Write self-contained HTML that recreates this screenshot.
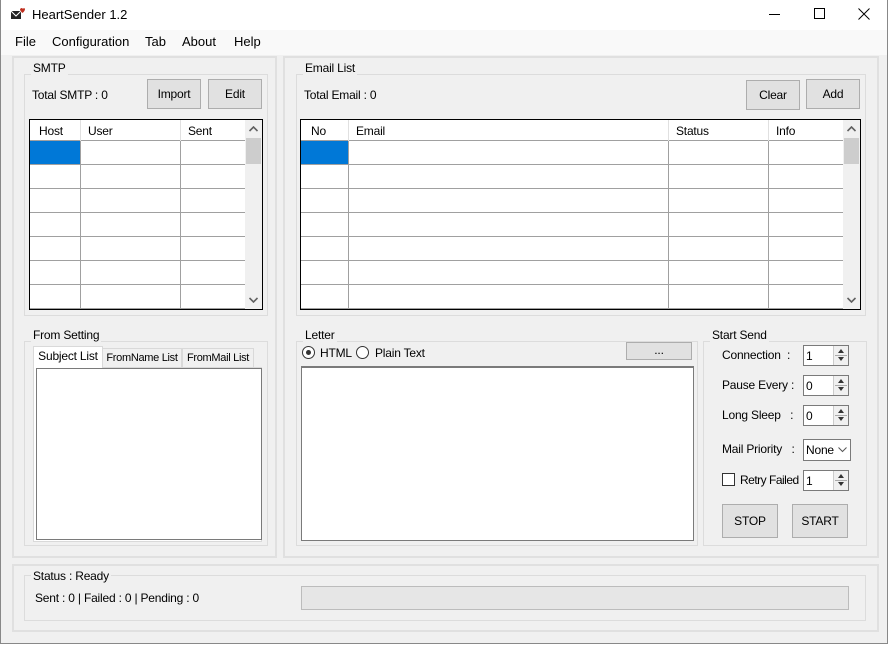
<!DOCTYPE html>
<html><head><meta charset="utf-8"><style>
*{box-sizing:border-box;margin:0;padding:0}
body{width:892px;height:645px;overflow:hidden;background:#fff;font-family:"Liberation Sans",Arial,sans-serif;font-size:12px;letter-spacing:-0.2px;color:#000;position:relative}
.a{position:absolute}
.win{left:0;top:0;width:888px;height:644px;border-left:1px solid #888;border-right:1px solid #888;border-bottom:1px solid #888;background:#f0f0f0}
.title{left:1px;top:0;width:886px;height:30px;background:#fff}
.menu{left:1px;top:30px;width:886px;height:25px;background:#f9f9f9;font-size:13px;letter-spacing:0}
.panel{border:2px solid #e0e0e0;background:#f0f0f0}
.grp{border:1px solid #dcdcdc}
.lbl{background:#f0f0f0;padding:0 2px;white-space:nowrap}
.btn{background:#e1e1e1;border:1px solid #adadad;text-align:center;font-size:12px}
.grid{background:#fff;border:1px solid #000;overflow:hidden}
.spin{background:#fff;border:1px solid #7a7a7a}
.arr{font-size:13px;color:#606060;font-weight:bold}
</style></head><body>
<div class="a win"></div>
<div class="a title"></div>
<svg class="a" style="left:11px;top:8px" width="14" height="12"><rect x="0" y="3" width="10" height="8" fill="#222"/><path d="M0 3 L5 8 L10 3" stroke="#fff" fill="none" stroke-width="1"/><path d="M9 1 q2-2 3 0 q1-2 2 0 q0 2-2.5 4 q-2.5-2-2.5-4z" fill="#c03020"/></svg>
<div class="a" style="left:32px;top:7px;font-size:13px;letter-spacing:0">HeartSender 1.2</div>
<div class="a" style="left:769px;top:14px;width:11px;height:1px;background:#000"></div>
<div class="a" style="left:814px;top:8px;width:11px;height:11px;border:1px solid #000"></div>
<svg class="a" style="left:858px;top:8px" width="12" height="12"><path d="M0.5 0.5L11.5 11.5M11.5 0.5L0.5 11.5" stroke="#000" stroke-width="1"/></svg>
<div class="a menu"><span class="a" style="left:14px;top:4px">File</span><span class="a" style="left:51px;top:4px">Configuration</span><span class="a" style="left:144px;top:4px">Tab</span><span class="a" style="left:181px;top:4px">About</span><span class="a" style="left:233px;top:4px">Help</span></div>

<div class="a panel" style="left:12px;top:56px;width:265px;height:502px"></div>
<div class="a panel" style="left:283px;top:56px;width:596px;height:502px"></div>
<div class="a panel" style="left:12px;top:564px;width:867px;height:68px"></div>

<!-- SMTP -->
<div class="a grp" style="left:24px;top:74px;width:244px;height:242px"></div>
<div class="a lbl" style="left:31px;top:61px">SMTP</div>
<div class="a" style="left:32px;top:88px">Total SMTP : 0</div>
<div class="a btn" style="left:147px;top:79px;width:54px;height:30px;line-height:28px">Import</div>
<div class="a btn" style="left:208px;top:79px;width:54px;height:30px;line-height:28px">Edit</div>
<div class="a grid" style="left:29px;top:119px;width:234px;height:191px">
 <div class="a" style="left:0;top:0;width:215px;height:21px;border-bottom:1px solid #a0a0a0">
  <span class="a" style="left:9px;top:4px">Host</span><span class="a" style="left:58px;top:4px">User</span><span class="a" style="left:158px;top:4px">Sent</span>
  <div class="a" style="left:50px;top:0;width:1px;height:21px;background:#e0e0e0"></div><div class="a" style="left:150px;top:0;width:1px;height:21px;background:#e0e0e0"></div>
 </div>
 <div class="a" style="left:0;top:21px;width:215px;height:170px;background:linear-gradient(#a0a0a0,#a0a0a0) 50px 0/1px 100% no-repeat,linear-gradient(#a0a0a0,#a0a0a0) 150px 0/1px 100% no-repeat,repeating-linear-gradient(#fff 0 23px,#a0a0a0 23px 24px)"></div>
 <div class="a" style="left:0;top:21px;width:50px;height:23px;background:#0078d7"></div>
 <div class="a" style="left:215px;top:0;width:17px;height:189px;background:#f0f0f0"></div>
 <div class="a" style="left:216px;top:18px;width:15px;height:26px;background:#cdcdcd"></div>
 <svg class="a" style="left:219px;top:6px" width="9" height="6"><path d="M0.5 5L4.5 1L8.5 5" stroke="#606060" stroke-width="1.6" fill="none"/></svg>
 <svg class="a" style="left:219px;top:177px" width="9" height="6"><path d="M0.5 1L4.5 5L8.5 1" stroke="#606060" stroke-width="1.6" fill="none"/></svg>
</div>

<!-- Email list -->
<div class="a grp" style="left:296px;top:74px;width:570px;height:242px"></div>
<div class="a lbl" style="left:303px;top:61px">Email List</div>
<div class="a" style="left:304px;top:88px">Total Email : 0</div>
<div class="a btn" style="left:746px;top:80px;width:54px;height:30px;line-height:28px">Clear</div>
<div class="a btn" style="left:806px;top:79px;width:54px;height:30px;line-height:28px">Add</div>
<div class="a grid" style="left:300px;top:119px;width:561px;height:191px">
 <div class="a" style="left:0;top:0;width:542px;height:21px;border-bottom:1px solid #a0a0a0">
  <span class="a" style="left:10px;top:4px">No</span><span class="a" style="left:55px;top:4px">Email</span><span class="a" style="left:375px;top:4px">Status</span><span class="a" style="left:475px;top:4px">Info</span>
  <div class="a" style="left:47px;top:0;width:1px;height:21px;background:#e0e0e0"></div><div class="a" style="left:367px;top:0;width:1px;height:21px;background:#e0e0e0"></div><div class="a" style="left:467px;top:0;width:1px;height:21px;background:#e0e0e0"></div>
 </div>
 <div class="a" style="left:0;top:21px;width:542px;height:170px;background:linear-gradient(#a0a0a0,#a0a0a0) 47px 0/1px 100% no-repeat,linear-gradient(#a0a0a0,#a0a0a0) 367px 0/1px 100% no-repeat,linear-gradient(#a0a0a0,#a0a0a0) 467px 0/1px 100% no-repeat,repeating-linear-gradient(#fff 0 23px,#a0a0a0 23px 24px)"></div>
 <div class="a" style="left:0;top:21px;width:47px;height:23px;background:#0078d7"></div>
 <div class="a" style="left:542px;top:0;width:17px;height:189px;background:#f0f0f0"></div>
 <div class="a" style="left:543px;top:18px;width:15px;height:26px;background:#cdcdcd"></div>
 <svg class="a" style="left:546px;top:6px" width="9" height="6"><path d="M0.5 5L4.5 1L8.5 5" stroke="#606060" stroke-width="1.6" fill="none"/></svg>
 <svg class="a" style="left:546px;top:177px" width="9" height="6"><path d="M0.5 1L4.5 5L8.5 1" stroke="#606060" stroke-width="1.6" fill="none"/></svg>
</div>

<!-- From setting -->
<div class="a grp" style="left:24px;top:341px;width:244px;height:205px"></div>
<div class="a lbl" style="left:31px;top:328px">From Setting</div>
<div class="a" style="left:33px;top:367px;width:229px;height:175px;border:1px solid #d9d9d9;background:#fff"></div>
<div class="a" style="left:102px;top:348px;width:80px;height:20px;border:1px solid #d9d9d9;background:#f0f0f0;font-size:11px;text-align:center;line-height:18px;letter-spacing:-0.3px">FromName List</div>
<div class="a" style="left:182px;top:348px;width:72px;height:20px;border:1px solid #d9d9d9;background:#f0f0f0;font-size:11px;text-align:center;line-height:18px;letter-spacing:-0.3px">FromMail List</div>
<div class="a" style="left:33px;top:346px;width:70px;height:23px;border:1px solid #d9d9d9;border-bottom:none;background:#fff;text-align:center;line-height:19px">Subject List</div>
<div class="a" style="left:36px;top:368px;width:226px;height:172px;border:1px solid #7a7a7a;background:#fff"></div>

<!-- Letter -->
<div class="a grp" style="left:296px;top:341px;width:402px;height:205px"></div>
<div class="a lbl" style="left:303px;top:328px">Letter</div>
<div class="a" style="left:302px;top:346px;width:13px;height:13px;border-radius:50%;border:1px solid #333;background:#fff"></div>
<div class="a" style="left:306px;top:350px;width:5px;height:5px;border-radius:50%;background:#333"></div>
<div class="a" style="left:320px;top:346px">HTML</div>
<div class="a" style="left:356px;top:346px;width:13px;height:13px;border-radius:50%;border:1px solid #333;background:#fff"></div>
<div class="a" style="left:375px;top:346px">Plain Text</div>
<div class="a btn" style="left:626px;top:342px;width:66px;height:18px;line-height:14px">...</div>
<div class="a" style="left:301px;top:366px;width:393px;height:175px;border:1px solid #7a7a7a;border-top:2px solid #7a7a7a;background:#fff"></div>

<!-- Start send -->
<div class="a grp" style="left:703px;top:341px;width:164px;height:205px"></div>
<div class="a lbl" style="left:710px;top:328px">Start Send</div>
<div class="a" style="left:722px;top:348px">Connection&nbsp;&nbsp;:</div>
<div class="a" style="left:722px;top:378px">Pause Every :</div>
<div class="a" style="left:722px;top:408px">Long Sleep&nbsp;&nbsp;&nbsp;:</div>
<div class="a" style="left:722px;top:442px">Mail Priority&nbsp;&nbsp;&nbsp;:</div>
<div class="a spin" style="left:803px;top:345px;width:46px;height:21px"><span class="a" style="left:2px;top:3px">1</span></div>
<div class="a spin" style="left:803px;top:375px;width:46px;height:21px"><span class="a" style="left:2px;top:3px">0</span></div>
<div class="a spin" style="left:803px;top:405px;width:46px;height:21px"><span class="a" style="left:2px;top:3px">0</span></div>
<div class="a spin" style="left:803px;top:470px;width:46px;height:21px"><span class="a" style="left:2px;top:3px">1</span></div>
<div class="a spin" style="left:803px;top:439px;width:48px;height:22px;border-color:#7a7a7a"><span class="a" style="left:2px;top:3px">None</span><svg class="a" style="left:34px;top:7px" width="9" height="6"><path d="M0.5 0.5L4.5 4.5L8.5 0.5" stroke="#555" fill="none"/></svg></div>
<div class="a" style="left:722px;top:473px;width:13px;height:13px;border:1px solid #333;background:#fff"></div>
<div class="a" style="left:740px;top:473px;letter-spacing:-0.5px">Retry Failed</div>
<div class="a btn" style="left:722px;top:504px;width:56px;height:34px;line-height:32px">STOP</div>
<div class="a btn" style="left:792px;top:504px;width:56px;height:34px;line-height:32px">START</div>

<!-- Status -->
<div class="a grp" style="left:24px;top:575px;width:842px;height:46px"></div>
<div class="a lbl" style="left:31px;top:569px">Status : Ready</div>
<div class="a" style="left:35px;top:591px">Sent : 0 | Failed : 0 | Pending : 0</div>
<div class="a" style="left:301px;top:586px;width:548px;height:24px;border:1px solid #bcbcbc;background:#e6e6e6"></div>

<style>
.sb{position:absolute;width:15px;height:19px;left:833px;background:#f0f0f0;border-left:1px solid #ccc}
.sb:before,.sb:after{content:"";position:absolute;left:4px;border-left:3px solid transparent;border-right:3px solid transparent}
.sb:before{top:3px;border-bottom:4px solid #333}
.sb:after{top:11px;border-top:4px solid #333}
.sb i{position:absolute;left:1px;top:9px;width:12px;height:1px;background:#aaa}
</style>
<div class="sb" style="top:346px"><i></i></div>
<div class="sb" style="top:376px"><i></i></div>
<div class="sb" style="top:406px"><i></i></div>
<div class="sb" style="top:471px"><i></i></div>
</body></html>
